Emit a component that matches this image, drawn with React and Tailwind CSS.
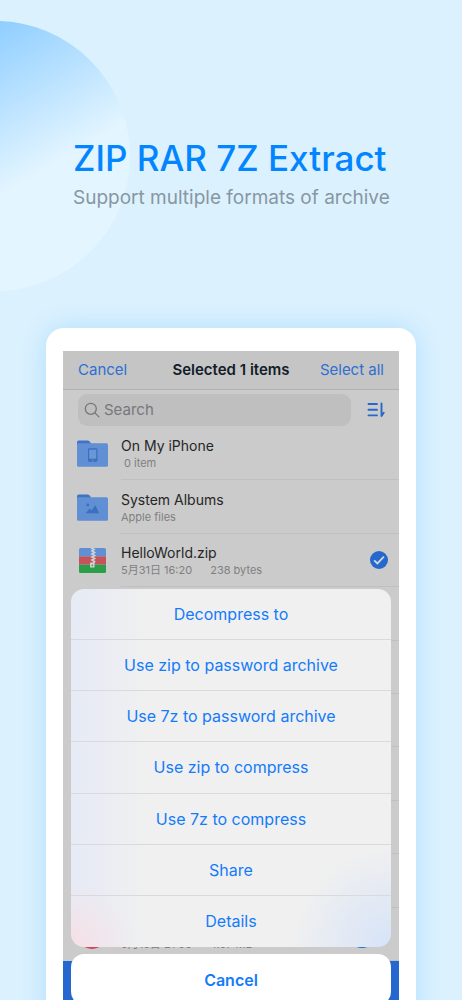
import { useState } from 'react'

const actions = [
  'Decompress to',
  'Use zip to password archive',
  'Use 7z to password archive',
  'Use zip to compress',
  'Use 7z to compress',
  'Share',
  'Details',
]

const files = [
  { icon: 'phone', name: 'On My iPhone', info: '0 item', indent: true },
  { icon: 'album', name: 'System Albums', info: 'Apple files' },
  { icon: 'zip', name: 'HelloWorld.zip', info: '5月31日 16:20', size: '238 bytes', checked: true },
  {},
  {},
  {},
  {},
  {},
  {},
  { icon: 'disc', name: '', info: '5月15日 21:56', size: '4.57 MB', badge: true },
]

function FolderIcon({ children }) {
  return (
    <svg viewBox="0 0 31 27" className="h-[27px] w-[31px]" aria-hidden="true">
      <path d="M0 2.2Q0 .5 1.7.5h9.1q.9 0 1.5.7L14 3.2V9H0z" fill="#3f74c4" />
      <path d="M0 4.6Q0 3.3 1.3 3.3h28.2q1.5 0 1.5 1.5v20.4q0 1.5-1.5 1.5H1.5Q0 26.7 0 25.2z" fill="#608fd3" />
      {children}
    </svg>
  )
}

function FileIcon({ type }) {
  if (type === 'phone') {
    return (
      <FolderIcon>
        <rect x="11" y="8.2" width="9.4" height="13.6" rx="1.4" fill="#3b6fc0" />
        <rect x="12.2" y="9.7" width="7" height="9" fill="#6b97d6" />
        <circle cx="15.7" cy="20.3" r=".8" fill="#6b97d6" />
      </FolderIcon>
    )
  }
  if (type === 'album') {
    return (
      <FolderIcon>
        <circle cx="10.8" cy="11" r="1.4" fill="#3b6fc0" />
        <path d="M8.7 19.2l3.8-4.6 2.1 2 3.6-5.6 4 8.2z" fill="#3b6fc0" />
      </FolderIcon>
    )
  }
  if (type === 'zip') {
    return (
      <svg viewBox="0 0 27 25" className="h-[25px] w-[27px]" aria-hidden="true">
        <path d="M0 8.4V1.5Q0 0 1.5 0h24Q27 0 27 1.5v6.9z" fill="#608fd3" />
        <path d="M0 8.4h27v8.3H0z" fill="#c5545a" />
        <path d="M0 16.7h27v6.8q0 1.5-1.5 1.5h-24Q0 25 0 23.5z" fill="#2b9e48" />
        <path
          d="M12 0l3 1.5-2 1.5 2.5 1.5-2.5 1.5 2.5 1.5-2.5 1.5 2.5 1.5-2.5 1.5 2.5 1.5-1 1.5"
          fill="none"
          stroke="#d0d3d6"
          strokeWidth="1.7"
        />
        <rect x="11" y="14.5" width="4.5" height="5" rx=".6" fill="#d0d3d6" />
        <rect x="12.5" y="16.6" width="1.5" height="1.6" fill="#5a8f69" />
      </svg>
    )
  }
  if (type === 'disc') {
    return <span className="size-[30px] rounded-full bg-[#cf4462]" />
  }
  return null
}

function FileRow({ file }) {
  return (
    <li className="flex items-stretch">
      <div className="flex w-[58px] shrink-0 items-center justify-center">
        <FileIcon type={file.icon} />
      </div>
      <div className="flex min-w-0 flex-1 items-center justify-between border-b border-[#c0c0c0] pr-[11px]">
        <div>
          <p className="h-5 text-[14px] leading-5 text-[#262626]">{file.name}</p>
          <p className={`flex h-[14px] gap-[18px] text-[11px] leading-[14px] text-[#808080] ${file.indent ? 'pl-[3px]' : ''}`}>
            <span>{file.info}</span>
            <span>{file.size}</span>
          </p>
        </div>
        {file.checked && (
          <svg viewBox="0 0 18 18" className="size-[18px]" role="img" aria-label="Selected">
            <circle cx="9" cy="9" r="9" fill="#2668cc" />
            <path d="M4.2 9.3l3.2 3.1 6.5-6.7" fill="none" stroke="#d3d8e0" strokeWidth="1.8" />
          </svg>
        )}
        {file.badge && <span className="mr-3 size-7 rounded-full bg-[#2668cc]" />}
      </div>
    </li>
  )
}

export default function App() {
  const [query, setQuery] = useState('')

  return (
    <main className="relative flex h-screen flex-col overflow-hidden bg-[#dcf1fe] font-['Inter','Noto_Sans_CJK_SC',sans-serif]">
      <div className="absolute -left-[140px] top-[21px] size-[270px] rounded-full bg-[linear-gradient(150deg,#8fceff_19%,#e3f5ff_60%)]" />

      <header className="relative shrink-0 px-[73px] pt-[136px]">
        <h1 className="whitespace-nowrap text-[35px] font-medium leading-[44px] text-[#0385ff]">ZIP RAR 7Z Extract</h1>
        <p className="mt-[6px] whitespace-nowrap text-[19px] leading-6 text-[#8797a3]">
          Support multiple formats of archive
        </p>
      </header>

      <section className="relative mx-[46px] mt-[118px] shrink-0 rounded-[18px] bg-white px-[17px] pb-6 pt-[23px] shadow-[0_0_28px_#aedfff]">
        <div className="relative bg-[#cbcbcb]">
          <div className="flex h-[39px] items-center justify-between border-b border-[#b1b1b1] bg-[#c5c5c5] px-[15px] text-[15px]">
            <button type="button" className="flex-1 text-left text-[#2e6fd2]">Cancel</button>
            <h2 className="font-semibold text-[#131c28]">Selected 1 items</h2>
            <button type="button" className="flex-1 text-right text-[#2e6fd2]">Select all</button>
          </div>

          <div className="flex items-center gap-4 pb-px pl-[15px] pr-[14px] pt-1">
            <label className="flex h-8 min-w-0 flex-1 items-center gap-1 rounded-[9px] bg-[#bfbfbf] pl-[6px]">
              <svg viewBox="0 0 16 16" className="size-4 shrink-0" fill="none" stroke="#77777b" strokeWidth="1.3" strokeLinecap="round" aria-hidden="true">
                <circle cx="6.8" cy="6.8" r="5.5" />
                <path d="M10.9 10.9l4 4" />
              </svg>
              <input
                type="text"
                aria-label="Search"
                placeholder="Search"
                value={query}
                onChange={(e) => setQuery(e.target.value)}
                className="min-w-0 flex-1 bg-transparent text-[15px] outline-none placeholder:text-[#77777b]"
              />
            </label>
            <button type="button" aria-label="Sort">
              <svg viewBox="0 0 18 16" className="h-4 w-[18px]" fill="none" stroke="#2668cc" strokeWidth="1.9" strokeLinecap="round">
                <path d="M1.5 2h8.5M1.5 7.7h8.5M1.5 13.4h8.5" />
                <path d="M14.5 1.5v12.5l2.2-3.2" strokeLinejoin="round" />
              </svg>
            </button>
          </div>

          <ul className="grid h-[534px] auto-rows-fr">
            {files.map((file, i) => (
              <FileRow key={i} file={file} />
            ))}
          </ul>
          <div className="h-[60px] bg-[#2467cf]" />

          {/* action sheet over the file list */}
          <div className="absolute inset-x-2 top-[238px]">
            <div className="grid h-[358px] auto-rows-fr overflow-hidden rounded-[13px] bg-[#f0f0f0] bg-[radial-gradient(circle_at_0%_100%,#f7e0e5,transparent_65px),radial-gradient(circle_at_100%_100%,#d6e3f8,transparent_100px),linear-gradient(90deg,#e6ebf6,#e9ecf4_8%,#f0f0f0_24%)]">
              {actions.map((action) => (
                <button
                  key={action}
                  type="button"
                  className="w-full border-b border-[#d9dadd] text-[16px] text-[#147bfb] last:border-b-0"
                >
                  {action}
                </button>
              ))}
            </div>
            <button type="button" className="mt-[7px] h-[51px] w-full rounded-[13px] bg-white text-[16px] font-semibold text-[#147bfb]">
              Cancel
            </button>
          </div>
        </div>
      </section>
    </main>
  )
}
